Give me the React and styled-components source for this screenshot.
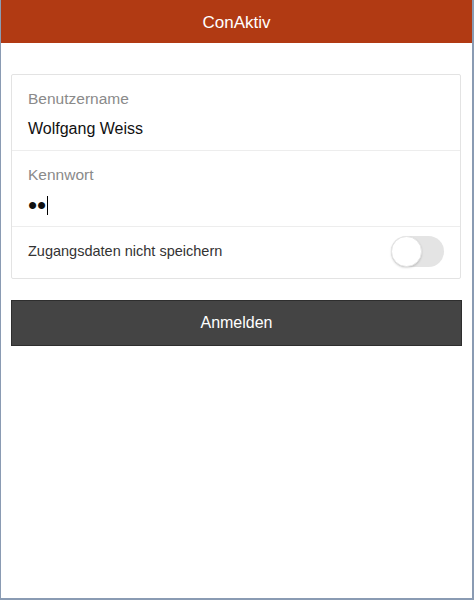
import React, {useState} from 'react';
import styled, {createGlobalStyle} from "styled-components";

const GlobalStyle = createGlobalStyle`
  html, body {
    margin: 0;
    padding: 0;
    background: #ffffff;
    font-family: "Liberation Sans", Arial, sans-serif;
  }
`;

const App = () => {
    const [keepData, setKeepData] = useState(false);
    return (
        <Frame>
            <GlobalStyle/>
            <Header>ConAktiv</Header>
            <Content>
                <Card>
                    <Field>
                        <Label>Benutzername</Label>
                        <Value>Wolfgang Weiss</Value>
                    </Field>
                    <Field>
                        <Label>Kennwort</Label>
                        <Value>
                            <Dots>••</Dots>
                            <Caret/>
                        </Value>
                    </Field>
                    <ToggleRow>
                        <ToggleText>Zugangsdaten nicht speichern</ToggleText>
                        <Toggle $on={keepData} onClick={() => setKeepData(!keepData)}>
                            <Knob $on={keepData}/>
                        </Toggle>
                    </ToggleRow>
                </Card>
                <LoginButton>Anmelden</LoginButton>
            </Content>
        </Frame>
    );
};

const Frame = styled.div`
  box-sizing: border-box;
  width: 474px;
  height: 600px;
  border-left: 1px solid #8a9bb3;
  border-right: 2px solid #8a9bb3;
  border-bottom: 2px solid #8a9bb3;
  background: #ffffff;
  display: flex;
  flex-direction: column;
`;

const Header = styled.div`
  height: 43px;
  box-sizing: border-box;
  padding-top: 3px;
  background: #b13a13;
  color: #ffffff;
  font-size: 17px;
  display: flex;
  align-items: center;
  justify-content: center;
`;

const Content = styled.div`
  padding: 31px 9px 0 10px;
  display: flex;
  flex-direction: column;
  gap: 21px;
`;

const Card = styled.div`
  border: 1px solid #e3e3e3;
  border-radius: 2px;
  background: #ffffff;
  width: 450px;
  box-sizing: border-box;
`;

const Field = styled.div`
  height: 76px;
  box-sizing: border-box;
  border-bottom: 1px solid #ededed;
  padding: 14px 16px 0 16px;
`;

const Label = styled.div`
  font-size: 15.5px;
  color: #8a8a8a;
  line-height: 20px;
`;

const Value = styled.div`
  margin-top: 10px;
  font-size: 16px;
  color: #111111;
  line-height: 20px;
  height: 20px;
  display: flex;
  align-items: center;
`;

const Dots = styled.span`
  font-size: 26px;
  line-height: 20px;
  letter-spacing: 0;
`;

const Caret = styled.span`
  width: 1px;
  height: 19px;
  background: #000000;
  margin-left: 1px;
`;

const ToggleRow = styled.div`
  height: 51px;
  box-sizing: border-box;
  padding: 0 16px 3px 16px;
  display: flex;
  align-items: center;
  justify-content: space-between;
`;

const ToggleText = styled.div`
  font-size: 14.5px;
  color: #333333;
`;

const Toggle = styled.div`
  width: 53px;
  height: 31px;
  border-radius: 16px;
  background: ${p => p.$on ? "#b13a13" : "#e4e4e4"};
  position: relative;
  cursor: pointer;
`;

const Knob = styled.div`
  position: absolute;
  top: 0;
  left: ${p => p.$on ? "22px" : "0"};
  width: 31px;
  height: 31px;
  border-radius: 50%;
  background: #ffffff;
  box-sizing: border-box;
  border: 1px solid #e6e6e6;
  box-shadow: 0 1px 2px rgba(0, 0, 0, 0.15);
`;

const LoginButton = styled.button`
  width: 451px;
  height: 46px;
  background: #444444;
  border: 1px solid #2e2e2e;
  color: #ffffff;
  font-family: "Liberation Sans", Arial, sans-serif;
  font-size: 16px;
  cursor: pointer;
`;

export default App;
